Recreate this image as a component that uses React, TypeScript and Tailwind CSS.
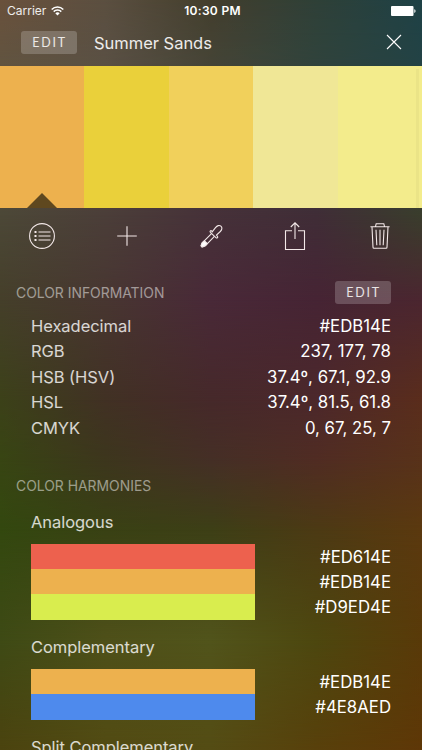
import { useState } from 'react';
import type { ReactNode } from 'react';

const palette = [
  { hex: '#EDB14E', bg: 'bg-[#edb14e]' },
  { hex: '#EAD03A', bg: 'bg-[#ead03a]' },
  { hex: '#F1D05B', bg: 'bg-[#f1d05b]' },
  { hex: '#F0E796', bg: 'bg-[#f0e796]' },
  { hex: '#F3EC8C', bg: 'bg-[#f3ec8c]' },
];

const info = [
  { label: 'Hexadecimal', value: '#EDB14E' },
  { label: 'RGB', value: '237, 177, 78' },
  { label: 'HSB (HSV)', value: '37.4º, 67.1, 92.9' },
  { label: 'HSL', value: '37.4º, 81.5, 61.8' },
  { label: 'CMYK', value: '0, 67, 25, 7' },
];

const harmonies = [
  { name: 'Analogous', colors: ['#ED614E', '#EDB14E', '#D9ED4E'] },
  { name: 'Complementary', colors: ['#EDB14E', '#4E8AED'] },
  { name: 'Split Complementary', colors: [] },
];

// rows of the backdrop, each one fades into the next
const backdrop = [
  { y: 0, colors: ['#6a513c', '#5b4f40', '#433e2d', '#2f4038', '#1e4146'] },
  { y: 65, colors: ['#615440', '#5a5044', '#454436', '#30433c', '#234345'] },
  { y: 215, colors: ['#4c4837', '#4b3e39', '#463139', '#402d37', '#3a3d2c'] },
  { y: 300, colors: ['#453f2a', '#483631', '#492938', '#462434', '#4b2630'] },
  { y: 400, colors: ['#3c4119', '#413124', '#46292a', '#4c282b', '#5a2d1c'] },
  { y: 460, colors: ['#384513', '#3d361d', '#452f26', '#502c23', '#58321a'] },
  { y: 530, colors: ['#33480f', '#394114', '#3d3f16', '#4c3a14', '#5b390f'] },
  { y: 640, colors: ['#3e4a15', '#4e5019', '#51541b', '#4d470f', '#593a09'] },
  { y: 750, colors: ['#4b430f', '#524b13', '#544c14', '#58400b', '#5e3707'] },
];

function Backdrop() {
  return (
    <div className="absolute inset-0">
      {backdrop.map((row, i) => {
        const mask = i === 0 ? undefined : `linear-gradient(to bottom, transparent ${backdrop[i - 1].y}px, black ${row.y}px)`;
        return (
          <div
            key={row.y}
            className="absolute inset-0"
            style={{ background: `linear-gradient(to right, ${row.colors.join(', ')})`, maskImage: mask }}
          />
        );
      })}
    </div>
  );
}

function EditButton() {
  return (
    <button className="h-[23px] w-14 rounded-[3px] bg-white/20 pl-[1px] text-center font-['Lato',sans-serif] text-[12.4px] leading-[23px] tracking-[1.8px] text-white/85">
      EDIT
    </button>
  );
}

function Tool({ label, children }: { label: string; children: ReactNode }) {
  return (
    <button aria-label={label} className="flex w-[84.4px] shrink-0 justify-center">
      <svg width="32" height="32" viewBox="0 0 32 32" fill="none" stroke="#f3e8e8" strokeWidth="1.1">
        {children}
      </svg>
    </button>
  );
}

function StatusBar() {
  return (
    <div className="flex h-[22px] items-center justify-between pr-[6px] pl-[7px] text-xs text-white/90">
      <div className="flex w-28 items-center gap-[5px]">
        <span>Carrier</span>
        <svg width="13" height="10" viewBox="0 0 13 10" fill="none" stroke="white" strokeWidth="1.5">
          <path d="M0.7 3.5a8.2 8.2 0 0 1 11.6 0M2.7 5.6a5.4 5.4 0 0 1 7.6 0" />
          <path d="M6.5 9.6 4.3 7.3a3.2 3.2 0 0 1 4.4 0z" fill="white" stroke="none" />
        </svg>
      </div>
      <span className="pl-[2px] font-semibold tracking-[0.3px] text-white">10:30 PM</span>
      <div className="flex w-28 justify-end">
        <svg width="25" height="10" viewBox="0 0 25 10" fill="white">
          <rect width="22.5" height="10" rx="1" />
          <path d="M23.3 3.2c1.6.2 1.6 3.4 0 3.6z" />
        </svg>
      </div>
    </div>
  );
}

export default function App() {
  const [selected, setSelected] = useState(0);

  return (
    <div className="relative h-[750px] w-[422px] overflow-hidden font-['Inter',sans-serif]">
      <Backdrop />
      <div className="relative flex flex-col">
        <StatusBar />

        <header className="flex h-[43.5px] items-center pr-[20.5px] pb-[3px] pl-[21px]">
          <EditButton />
          <h1 className="ml-[17px] pt-[3px] text-[16.5px] tracking-[-0.02px] text-white/90">Summer Sands</h1>
          <button aria-label="Close" className="ml-auto">
            <svg width="16" height="16" viewBox="0 0 16 16" stroke="white" strokeWidth="1.1">
              <path d="M1 1l14 14M15 1L1 15" />
            </svg>
          </button>
        </header>

        <div className="relative flex h-[142.5px]">
          {palette.map((color, i) => (
            <button key={color.hex} aria-label={color.hex} onClick={() => setSelected(i)} className={`flex w-[84.6px] items-end justify-center ${color.bg}`}>
              {i === selected && (
                <svg width="30" height="15" viewBox="0 0 30 15" fill="#5f481f">
                  <path d="M15 0l15 15H0z" />
                </svg>
              )}
            </button>
          ))}
          <div className="absolute top-[3px] right-[3px] bottom-0 w-[3px] bg-black/[0.03]" />
        </div>

        <div className="flex h-14 items-center pb-[1px]">
          <Tool label="List">
            <circle cx="16" cy="16" r="12.4" />
            <path d="M12.5 12h12M12.5 16h12M12.5 20h12" strokeWidth="1.2" />
            <path d="M8.5 12h2M8.5 16h2M8.5 20h2" strokeWidth="2" />
          </Tool>
          <Tool label="Add">
            <path d="M16 6.2v19.6M6.2 16h19.6" />
          </Tool>
          <Tool label="Pick color">
            <path d="M17.2 11.8l3.3-4.1c1.7-2.1 3.8-2.9 5.4-1.6s1.2 3.6-.6 5.4l-3.8 3.6 1 1.2c.8 1.1-.6 2.3-1.6 1.4l-5.5-5.4c-.9-1 .3-2.1 1.3-1.3z" />
            <path d="M16.5 13.7l-9 9c-.8.9-.6 1.8-1.4 2.8.1 1.1.9 1.6 1.8 1.4.9-.7 1.9-.6 2.8-1.5l8.7-9" />
            <path d="M9.5 20.8l2.8 2.7-2 2.2-2.6 1c-1 .2-1.7-.6-1.5-1.6l.9-2.2z" fill="#fff" />
          </Tool>
          <Tool label="Share">
            <path d="M13 10.7H6.5v18.8h19V10.7H19M16 19V3M11.8 7L16 2.8 20.2 7" />
          </Tool>
          <Tool label="Delete">
            <path d="M6.4 6.7h19.2M11.5 6.4l.7-2.7h7.6l.7 2.7M8 7l1 20.2c0 .6.4 1 1 1h12c.6 0 1-.4 1-1L24 7" />
            <path d="M12 9.8l.8 15.4M16 9.8v15.4M20 9.8l-.8 15.4" />
          </Tool>
        </div>

        <section className="px-[31px]">
          <div className="-ml-[15px] flex h-[57px] items-center justify-between">
            <h2 className="pt-[1px] text-[13.9px] text-white/50">COLOR INFORMATION</h2>
            <EditButton />
          </div>
          <dl className="-mt-[7px] text-[16.5px] leading-[25.4px]">
            {info.map((row) => (
              <div key={row.label} className="flex justify-between">
                <dt className="tracking-[-0.05px] text-white/80">{row.label}</dt>
                <dd className="text-[16.8px] text-white">{row.value}</dd>
              </div>
            ))}
          </dl>
        </section>

        <section className="mt-[34.7px] px-[31px]">
          <h2 className="-ml-[15px] text-[13.9px] leading-[20px] text-white/50">COLOR HARMONIES</h2>
          <div className="mt-[12.8px] flex flex-col text-[16.5px]">
            {harmonies.map((harmony) => (
              <div key={harmony.name} className="mb-[14.4px]">
                <h3 className="mb-[9px] leading-[26px] tracking-[-0.05px] text-white/80">{harmony.name}</h3>
                {harmony.colors.map((hex) => (
                  <div key={hex} className="flex h-[25.4px] justify-between">
                    <div className="h-full w-56" style={{ backgroundColor: hex }} />
                    <span className="pt-[1px] text-[16.8px] leading-[25.4px] text-white">{hex}</span>
                  </div>
                ))}
              </div>
            ))}
          </div>
        </section>
      </div>
    </div>
  );
}
